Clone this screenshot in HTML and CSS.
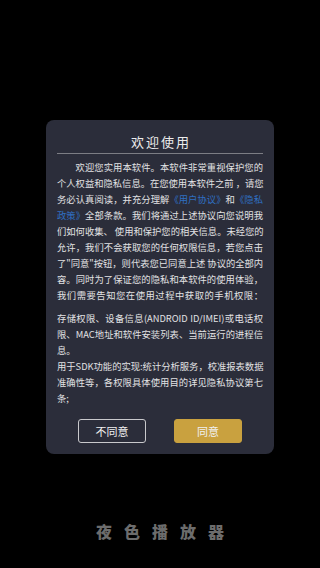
FILE: index.html
```html
<!DOCTYPE html>
<html lang="zh">
<head>
<meta charset="utf-8">
<meta name="viewport" content="width=320">
<link rel="stylesheet" href="styles.css">
</head>
<body>
<div class="screen">
  <div class="dialog">
    <div class="title">欢迎使用</div>
    <div class="body">
      <div class="para">
        <div class="ln indent">欢迎您实用本软件。本软件非常重视保护您的</div>
        <div class="ln">个人权益和隐私信息。在您使用本软件之前 ，请您</div>
        <div class="ln">务必认真阅读，并充分理解<span class="link">《用户协议》</span>和<span class="link">《隐私</span></div>
        <div class="ln"><span class="link">政策》</span>全部条款。我们将通过上述协议向您说明我</div>
        <div class="ln">们如何收集、 使用和保护您的相关信息。未经您的</div>
        <div class="ln">允许，我们不会获取您的任何权限信息，若您点击</div>
        <div class="ln">了"同意"按钮，则代表您已同意上述 协议的全部内</div>
        <div class="ln">容。同时为了保证您的隐私和本软件的使用体验，</div>
        <div class="ln">我们需要告知您在使用过程中获取的手机权限：</div>
      </div>
      <div class="para gap">
        <div class="ln">存储权限、设备信息(ANDROID ID/IMEI)或电话权</div>
        <div class="ln">限、MAC地址和软件安装列表、当前运行的进程信</div>
        <div class="ln last">息。</div>
        <div class="ln">用于SDK功能的实现:统计分析服务，校准报表数据</div>
        <div class="ln">准确性等，各权限具体使用目的详见隐私协议第七</div>
        <div class="ln last">条;</div>
      </div>
    </div>
    <div class="actions">
      <button class="btn btn-ghost">不同意</button>
      <button class="btn btn-gold">同意</button>
    </div>
  </div>
  <div class="brand">夜色播放器</div>
</div>
</body>
</html>
```

FILE: styles.css
```css
* { box-sizing: border-box; }
html, body {
  margin: 0;
  padding: 0;
  background: #000;
  width: 320px;
  height: 568px;
  overflow: hidden;
  font-family: "Noto Sans CJK SC", "Noto Sans", sans-serif;
}
.screen {
  display: flex;
  flex-direction: column;
  align-items: center;
  height: 568px;
}
.dialog {
  margin-top: 120px;
  width: 228px;
  background: #2b2d3a;
  border-radius: 8px;
  padding: 13px 11px 11px;
  display: flex;
  flex-direction: column;
  align-items: stretch;
}
.title {
  color: #ececec;
  font-size: 13px;
  line-height: 18px;
  letter-spacing: 2px;
  padding-left: 2px;
  text-align: center;
  margin-bottom: 2px;
}
.body {
  border-top: 1px solid #7c7d84;
  padding-top: 5px;
  width: 206px;
  color: #e2e2e4;
  font-size: 9.3px;
}
.ln {
  height: 16px;
  line-height: 16px;
  white-space: nowrap;
  text-align: justify;
  text-align-last: justify;
}
.ln.last { text-align-last: left; }
.indent { padding-left: 18.6px; }
.gap { margin-top: 7px; }
.link { color: #2f6fc2; }
.actions {
  margin-top: 13px;
  display: flex;
  justify-content: center;
  gap: 28px;
}
.btn {
  width: 68px;
  height: 24px;
  border-radius: 3px;
  font-family: "Noto Sans CJK SC", sans-serif;
  font-size: 11px;
  color: #f0f0f0;
  padding: 0;
  cursor: pointer;
}
.btn-ghost {
  background: transparent;
  border: 1px solid #c9c9cc;
}
.btn-gold {
  background: #c9a13f;
  border: 1px solid #c9a13f;
}
.brand {
  margin-top: 66px;
  color: #6c6c6c;
  font-size: 16px;
  font-weight: 900;
  letter-spacing: 12px;
  padding-left: 12px;
  line-height: 22px;
}
```
